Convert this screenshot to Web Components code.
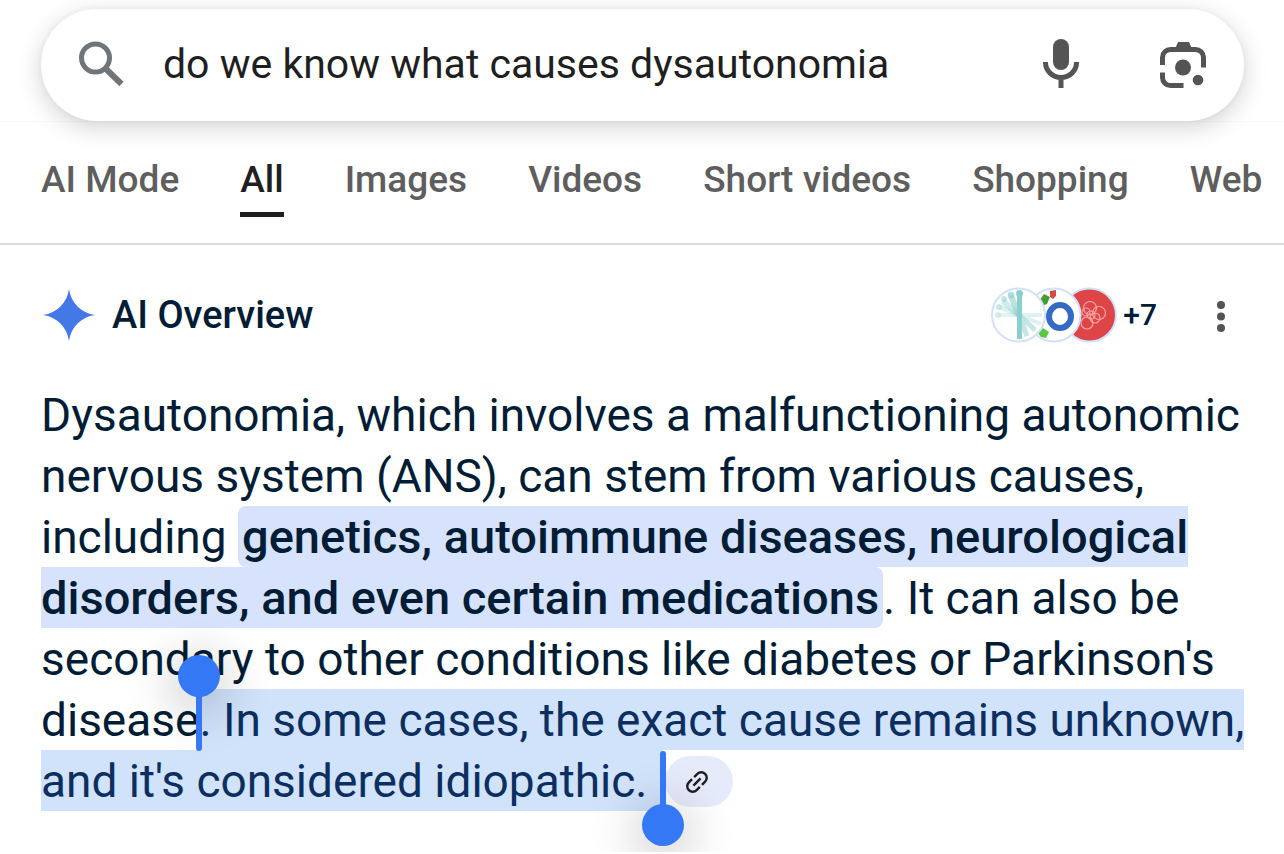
<!DOCTYPE html>
<html lang="en">
<head>
<meta charset="utf-8">
<meta name="viewport" content="width=device-width, initial-scale=1">
<title>do we know what causes dysautonomia - Search</title>
<style>
  body { margin: 0; background: #fff; font-family: Roboto, "Liberation Sans", sans-serif; color: #001d35; overflow-x: hidden; }
</style>
</head>
<body>
<results-page></results-page>
<script>
const define = (name, markup) => {
  const template = document.createElement("template");
  template.innerHTML = markup.replace(/>\s+</g, "><").trim();
  customElements.define(name, class extends HTMLElement {
    constructor() {
      super();
      this.attachShadow({ mode: "open" }).append(template.content.cloneNode(true));
    }
  });
};

define("search-box", `
  <style>
    :host { display: block; padding: 9px 40px 0 41px; border-bottom: 1px solid #fafafa; }
    form { display: flex; align-items: center; height: 112px; padding: 0 35px 2px 37px; box-sizing: border-box;
      border-radius: 56px; background: #fff; box-shadow: 0 6px 24px rgba(0,0,0,.18), 0 0 6px rgba(0,0,0,.04); }
    input { flex: 1; min-width: 0; margin: 0 16px 0 37px; padding: 0; border: 0; outline: 0; background: none;
      font: 400 41px/56px Roboto, sans-serif; color: #1f1f1f; }
    button { border: 0; background: none; padding: 0; flex: none; display: block; }
    button + button { margin-left: 72px; }
    svg { display: block; flex: none; }
  </style>
  <form role="search">
    <svg width="48" height="48" viewBox="0 0 48 48" fill="none" stroke="#70757a" aria-hidden="true">
      <circle cx="17.500" cy="18" r="14" stroke-width="5"/>
      <path d="M27.500 28.500L43.500 44" stroke-width="6"/>
    </svg>
    <input type="text" aria-label="Search" value="do we know what causes dysautonomia">
    <button type="button" aria-label="Search by voice">
      <svg width="48" height="52" viewBox="0 0 48 52" fill="none" stroke="#545454">
        <rect x="16" y="1" width="16" height="31" rx="8" fill="#545454" stroke="none"/>
        <path d="M8.500 24v.5a15.500 15 0 0 0 31 0v-.5M24 39v11" stroke-width="5"/>
      </svg>
    </button>
    <button type="button" aria-label="Search by image">
      <svg width="52" height="52" viewBox="0 0 52 52" fill="none" stroke="#545454" stroke-width="5">
        <path d="M5.500 27v-7.500a8 8 0 0 1 8-8h25a8 8 0 0 1 8 8v10M5.500 34.500v5a8 8 0 0 0 8 8h13"/>
        <path d="M18 11l3-7h11l3 7z" fill="#545454" stroke="none"/>
        <circle cx="26" cy="29.500" r="8" fill="#545454" stroke="none"/>
        <circle cx="41" cy="42" r="5.300" fill="#545454" stroke="none"/>
      </svg>
    </button>
  </form>`);

define("tab-link", `
  <style>
    :host { display: block; flex: none; }
    a { display: block; color: #5e5e5e; text-decoration: none; font: 500 37px/44px Roboto, sans-serif; padding-bottom: 10px; border-bottom: 5px solid transparent; }
    :host([selected]) a { color: #1f1f1f; border-color: #1f1f1f; }
  </style>
  <a href="#"><slot></slot></a>`);

define("tab-bar", `
  <style>
    :host { display: block; border-bottom: 2px solid #dadce0; }
    nav { display: flex; gap: 61px; padding: 36px 0 26px 41px; overflow: hidden; }
  </style>
  <nav aria-label="Result types"><slot></slot></nav>`);

define("source-stack", `
  <style>
    :host { display: block; }
    button { display: flex; align-items: center; border: 0; background: none; padding: 0; color: #001d35; font: 500 30px/40px Roboto, sans-serif; }
    svg { display: block; margin-right: 6px; }
  </style>
  <button type="button" aria-label="Show all sources">
    <svg width="127" height="56" viewBox="0 0 127 56">
      <circle cx="99.500" cy="28" r="26.500" fill="#dd4547" stroke="#d3e0fd" stroke-width="2"/>
      <g fill="none" stroke="#f3a6a2" stroke-width="1.200">
        <circle cx="100" cy="21" r="6.500"/><circle cx="109" cy="26" r="6.500"/><circle cx="97" cy="36" r="6"/>
        <circle cx="96" cy="25" r="4"/><circle cx="105" cy="31" r="5"/><circle cx="101" cy="28" r="4"/>
      </g>
      <circle cx="64" cy="28" r="26.500" fill="#fff" stroke="#d3e0fd" stroke-width="2"/>
      <path d="M49 14l5-7 6 3-3 7-6 2z" fill="#449b35"/><path d="M60 4l6-1 0 6-3 3-3-2z" fill="#d44a48"/>
      <path d="M48 46l5-5 6 4-3 6-5-1z" fill="#5bc842"/>
      <ellipse cx="70" cy="29.500" rx="11" ry="11.500" fill="#fff" stroke="#356bc5" stroke-width="6"/>
      <circle cx="28.500" cy="28" r="26.500" fill="#fff" stroke="#d3e0fd" stroke-width="2"/>
      <g stroke="#8bd0cd" stroke-linecap="butt">
        <path d="M29 28L8 28" stroke-width="4" opacity=".22"/>
        <path d="M29 28L10 20" stroke-width="5" opacity=".3"/>
        <path d="M29 28L13 14" stroke-width="6" opacity=".4"/>
        <path d="M29 28L21 9" stroke-width="6" opacity=".6"/>
        <path d="M29 28h23M29 28l22 9" stroke-width="4" opacity=".27"/>
        <path d="M29 28l16 15M29 28l8 21" stroke-width="5" opacity=".5"/>
        <path d="M29.500 8v44" stroke-width="5"/>
      </g>
      <g fill="#8bd0cd"><circle cx="29.500" cy="6.500" r="3.500"/><circle cx="21" cy="8" r="3.200" opacity=".7"/><circle cx="14" cy="12" r="3" opacity=".55"/><circle cx="9" cy="20" r="3" opacity=".45"/><circle cx="8" cy="28" r="3" opacity=".35"/></g>
    </svg>
    <span>+7</span>
  </button>`);

define("overview-header", `
  <style>
    :host { display: flex; align-items: center; padding: 0 15px 0 2px; }
    svg { display: block; }
    h2 { margin: 0 auto 0 17px; font: 500 38px/48px Roboto, sans-serif; }
    .more { border: 0; background: none; padding: 0; margin: 0 0 0 56px; }
  </style>
  <svg width="52" height="52" viewBox="0 0 52 52" aria-hidden="true"><path d="M26 0C28 14 38 24 52 26C38 28 28 38 26 52C24 38 14 28 0 26C14 24 24 14 26 0Z" fill="#4478e6"/></svg>
  <h2><slot></slot></h2>
  <source-stack></source-stack>
  <button class="more" type="button" aria-label="More options">
    <svg width="16" height="34" viewBox="0 0 16 34" fill="#545454"><circle cx="8" cy="7" r="4"/><circle cx="8" cy="18.500" r="4"/><circle cx="8" cy="30" r="4"/></svg>
  </button>`);

define("key-phrase", `
  <style>
    :host { display: inline; }
    mark { color: inherit; font-size: 47px; line-height: 1; font-weight: 500; background: #d7e2fd; padding: 3px 4px; border-radius: 8px; }
  </style>
  <mark><slot></slot></mark>`);

define("selected-text", `
  <style>
    :host { display: inline; }
    span { color: #0d2f60; background: #d0e3fb; padding: 4px 4px 3px 0; }
  </style>
  <span><slot></slot></span>`);

define("selection-handle", `
  <style>
    :host { display: inline-block; position: relative; width: 0; height: 46px; vertical-align: baseline; z-index: 1; }
    i { position: absolute; left: -3px; bottom: -15px; width: 6px; height: 61px; border-radius: 3px; background: #3478f6; }
    b { position: absolute; left: -21px; bottom: 39px; width: 42px; height: 42px; border-radius: 50%; background: #3478f6; box-shadow: 0 8px 48px 8px rgba(0,0,0,.2); }
    :host([end]) b { bottom: -49px; }
  </style>
  <b></b><i></i>`);

define("source-chip", `
  <style>
    :host { display: inline-block; vertical-align: top; margin: 5px 0 0 2px; }
    button { display: flex; align-items: center; justify-content: center; width: 68px; height: 51px; padding: 0 4px 0 0; border: 0; border-radius: 26px; background: #e6ebfb; }
  </style>
  <button type="button" aria-label="View related links">
    <svg width="24" height="24" viewBox="0 0 24 24" fill="none" stroke="#1f1f1f" stroke-width="2.400">
      <g transform="rotate(-45 12 12)"><path d="M10.500 6.500H6a5.500 5.500 0 0 0 0 11h4.500M13.500 6.500H18a5.500 5.500 0 0 1 0 11h-4.500M7 12h10"/></g>
    </svg>
  </button>`);

define("overview-text", `
  <style>
    :host { display: block; }
    p { margin: 0; font: 400 46px/61px Roboto, sans-serif; white-space: nowrap; }
  </style>
  <p><slot></slot></p>`);

define("results-page", `
  <style>
    :host { display: block; }
    main { padding: 42px 40px 40px 41px; }
    overview-text { margin-top: 42px; }
  </style>
  <search-box></search-box>
  <tab-bar>
    <tab-link>AI Mode</tab-link>
    <tab-link selected>All</tab-link>
    <tab-link>Images</tab-link>
    <tab-link>Videos</tab-link>
    <tab-link>Short videos</tab-link>
    <tab-link>Shopping</tab-link>
    <tab-link>Web</tab-link>
  </tab-bar>
  <main>
    <overview-header>AI Overview</overview-header>
    <overview-text>Dysautonomia, which involves a malfunctioning autonomic<br>nervous system (ANS), can stem from various causes,<br>including <key-phrase>genetics, autoimmune diseases, neurological<br>disorders, and even certain medications</key-phrase>. It can also be<br>secondary to other conditions like diabetes or Parkinson's<br>disease<selection-handle></selection-handle><selected-text>. In some cases, the exact cause remains unknown,<br>and it's considered idiopathic. </selected-text><selection-handle end></selection-handle><source-chip></source-chip></overview-text>
  </main>`);
</script>
</body>
</html>
